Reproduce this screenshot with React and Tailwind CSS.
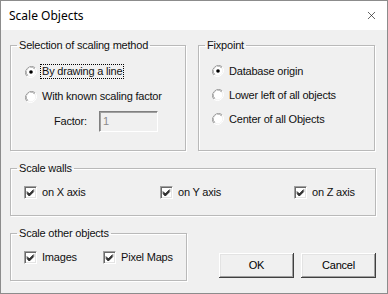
import { X } from 'lucide-react';

function Radio({ checked }) {
  return (
    <svg width="12" height="12" viewBox="0 0 12 12" className="shrink-0">
      <path d="M10.2 1.8 A6 6 0 0 0 1.8 10.2" fill="none" stroke="#a0a0a0" strokeWidth="1" />
      <path d="M9.4 2.6 A4.9 4.9 0 0 0 2.6 9.4" fill="none" stroke="#696969" strokeWidth="1" />
      <circle cx="6" cy="6" r="4.4" fill="#fff" />
      <path d="M1.8 10.2 A6 6 0 0 0 10.2 1.8" fill="none" stroke="#fff" strokeWidth="1" />
      {checked && <circle cx="6" cy="6" r="1.8" fill="#000" />}
    </svg>
  );
}

function Check() {
  return (
    <span className="flex h-[13px] w-[13px] shrink-0 items-center justify-center border border-t-[#a0a0a0] border-l-[#a0a0a0] border-r-white border-b-white bg-white shadow-[inset_1px_1px_0_#696969,inset_-1px_-1px_0_#e3e3e3]">
      <svg width="9" height="9" viewBox="0 0 9 9">
        <path d="M1 3.5 L3.3 6 L7.8 1.5 M1 4.5 L3.3 7 L7.8 2.5 M1 5.5 L3.3 8 L7.8 3.5" fill="none" stroke="#000" strokeWidth="1" />
      </svg>
    </span>
  );
}

function Group({ title, className, bodyClass, children }) {
  return (
    <fieldset className={`border border-[#b9b9b9] shadow-[inset_1px_1px_0_#fff,1px_1px_0_#fff] ${className}`}>
      <legend className="ml-[6px] px-[2px] leading-[13px]">{title}</legend>
      <div className={bodyClass}>{children}</div>
    </fieldset>
  );
}

function Btn({ children }) {
  return (
    <button className="h-[25px] w-[75px] bg-[#f0f0f0] text-[11px] text-black shadow-[inset_-1px_-1px_0_#404040,inset_1px_1px_0_#fff,inset_-2px_-2px_0_#a0a0a0,inset_2px_2px_0_#e3e3e3]">
      {children}
    </button>
  );
}

export default function App() {
  return (
    <div className="flex h-[294px] w-[388px] flex-col border border-[#8c8c8c] bg-[#f0f0f0] font-['Liberation_Sans',Arial,sans-serif] text-[11px] tracking-[-0.2px] text-[#111]">
      <div className="flex h-[29px] items-center justify-between bg-white pl-[8px] pr-[9px] tracking-normal">
        <span className="font-['Segoe_UI','Noto_Sans',sans-serif] text-[12px] text-black">Scale Objects</span>
        <X size={13} strokeWidth={1.2} />
      </div>

      <div className="flex flex-col px-[9px] pt-[9px]">
        <div className="flex gap-[12px]">
          <Group title="Selection of scaling method" className="h-[112px] w-[176px]" bodyClass="pl-[14px] pt-[7px]">
            <div className="flex h-[25px] items-center gap-[3px]">
              <Radio checked />
              <span className="border border-dotted border-black px-[1px] leading-[13px]">By drawing a line</span>
            </div>
            <div className="flex h-[25px] items-center gap-[5px]">
              <Radio />
              <span>With known scaling factor</span>
            </div>
            <div className="flex h-[25px] items-center pl-[29px]">
              <span className="w-[45px]">Factor:</span>
              <div className="flex h-[21px] w-[59px] items-center border border-t-[#808080] border-l-[#808080] border-r-white border-b-white bg-[#f0f0f0] pl-[3px] text-[#8a8a8a] shadow-[inset_1px_1px_0_#a0a0a0]">
                1
              </div>
            </div>
          </Group>

          <Group title="Fixpoint" className="h-[112px] w-[177px]" bodyClass="pl-[13px] pt-[7px]">
            <div className="flex h-[24px] items-center gap-[5px]">
              <Radio checked />
              <span>Database origin</span>
            </div>
            <div className="flex h-[24px] items-center gap-[5px]">
              <Radio />
              <span>Lower left of all objects</span>
            </div>
            <div className="flex h-[24px] items-center gap-[5px]">
              <Radio />
              <span>Center of all Objects</span>
            </div>
          </Group>
        </div>

        <Group title="Scale walls" className="mt-[11px] h-[54px] w-[366px]" bodyClass="pl-[13px] pt-[5px]">
          <div className="flex h-[24px] items-center">
            <div className="flex w-[136px] items-center gap-[5px]">
              <Check />
              <span>on X axis</span>
            </div>
            <div className="flex w-[134px] items-center gap-[5px]">
              <Check />
              <span>on Y axis</span>
            </div>
            <div className="flex items-center gap-[5px]">
              <Check />
              <span>on Z axis</span>
            </div>
          </div>
        </Group>

        <div className="mt-[11px] flex items-start">
          <Group title="Scale other objects" className="h-[54px] w-[177px]" bodyClass="pl-[13px] pt-[5px]">
            <div className="flex h-[24px] items-center">
              <div className="flex w-[79px] items-center gap-[5px]">
                <Check />
                <span>Images</span>
              </div>
              <div className="flex items-center gap-[5px]">
                <Check />
                <span>Pixel Maps</span>
              </div>
            </div>
          </Group>
          <div className="ml-[32px] mt-[26px] flex gap-[7px]">
            <Btn>OK</Btn>
            <Btn>Cancel</Btn>
          </div>
        </div>
      </div>
    </div>
  );
}
